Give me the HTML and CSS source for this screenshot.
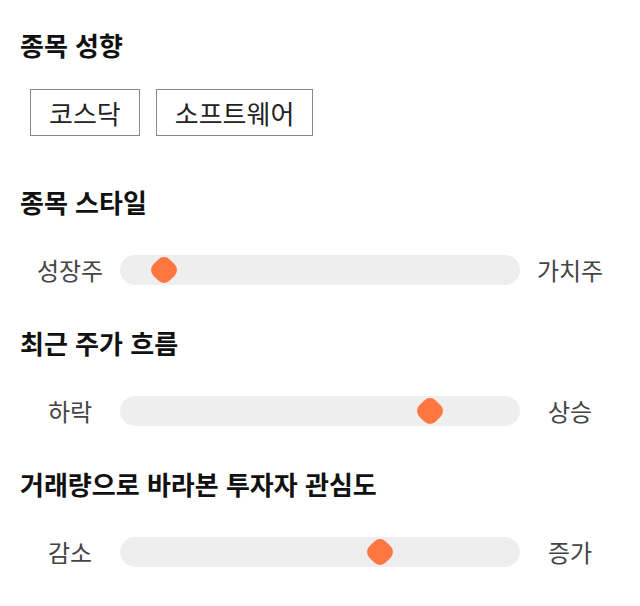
FILE: index.html
```html
<!DOCTYPE html>
<html lang="ko">
<head>
  <meta charset="UTF-8">
  <meta name="viewport" content="width=device-width, initial-scale=1.0">
  <title>종목 성향</title>
  <link rel="stylesheet" href="styles.css">
</head>
<body>
  <div class="panel">
    <div class="section section-tags">
      <h2>종목 성향</h2>
      <div class="tags">
        <span class="tag">코스닥</span>
        <span class="tag">소프트웨어</span>
      </div>
    </div>

    <div class="section">
      <h2>종목 스타일</h2>
      <div class="slider">
        <span class="label">성장주</span>
        <div class="track"><span class="thumb" style="left: 11%"></span></div>
        <span class="label">가치주</span>
      </div>
    </div>

    <div class="section">
      <h2>최근 주가 흐름</h2>
      <div class="slider">
        <span class="label">하락</span>
        <div class="track"><span class="thumb" style="left: 77.5%"></span></div>
        <span class="label">상승</span>
      </div>
    </div>

    <div class="section">
      <h2>거래량으로 바라본 투자자 관심도</h2>
      <div class="slider">
        <span class="label">감소</span>
        <div class="track"><span class="thumb" style="left: 65%"></span></div>
        <span class="label">증가</span>
      </div>
    </div>
  </div>
</body>
</html>
```

FILE: styles.css
```css
body {
  margin: 0;
  padding: 0;
  background: #fff;
  font-family: "Noto Sans CJK KR", "Noto Sans", sans-serif;
  color: #111;
}
.panel {
  display: flex;
  flex-direction: column;
  gap: 40px;
  width: 600px;
  padding: 29px 20px;
}
.section-tags {
  padding-bottom: 10px;
}
h2 {
  margin: 0;
  font-size: 26px;
  line-height: 32px;
  font-weight: bold;
  color: #111;
}
.tags {
  display: flex;
  gap: 16px;
  margin: 28px 0 0 10px;
}
.tag {
  display: flex;
  align-items: center;
  height: 45px;
  padding: 0 18px;
  border: 1px solid #888;
  font-size: 26px;
  color: #222;
}
.slider {
  display: flex;
  align-items: center;
  margin-top: 34px;
}
.label {
  width: 100px;
  text-align: center;
  font-size: 24px;
  color: #444;
}
.track {
  position: relative;
  flex: 1;
  height: 30px;
  border-radius: 15px;
  background: #eee;
}
.thumb {
  position: absolute;
  top: 50%;
  width: 23px;
  height: 23px;
  border-radius: 8px;
  background: #ff7640;
  transform: translate(-50%, -50%) rotate(45deg);
}
```
